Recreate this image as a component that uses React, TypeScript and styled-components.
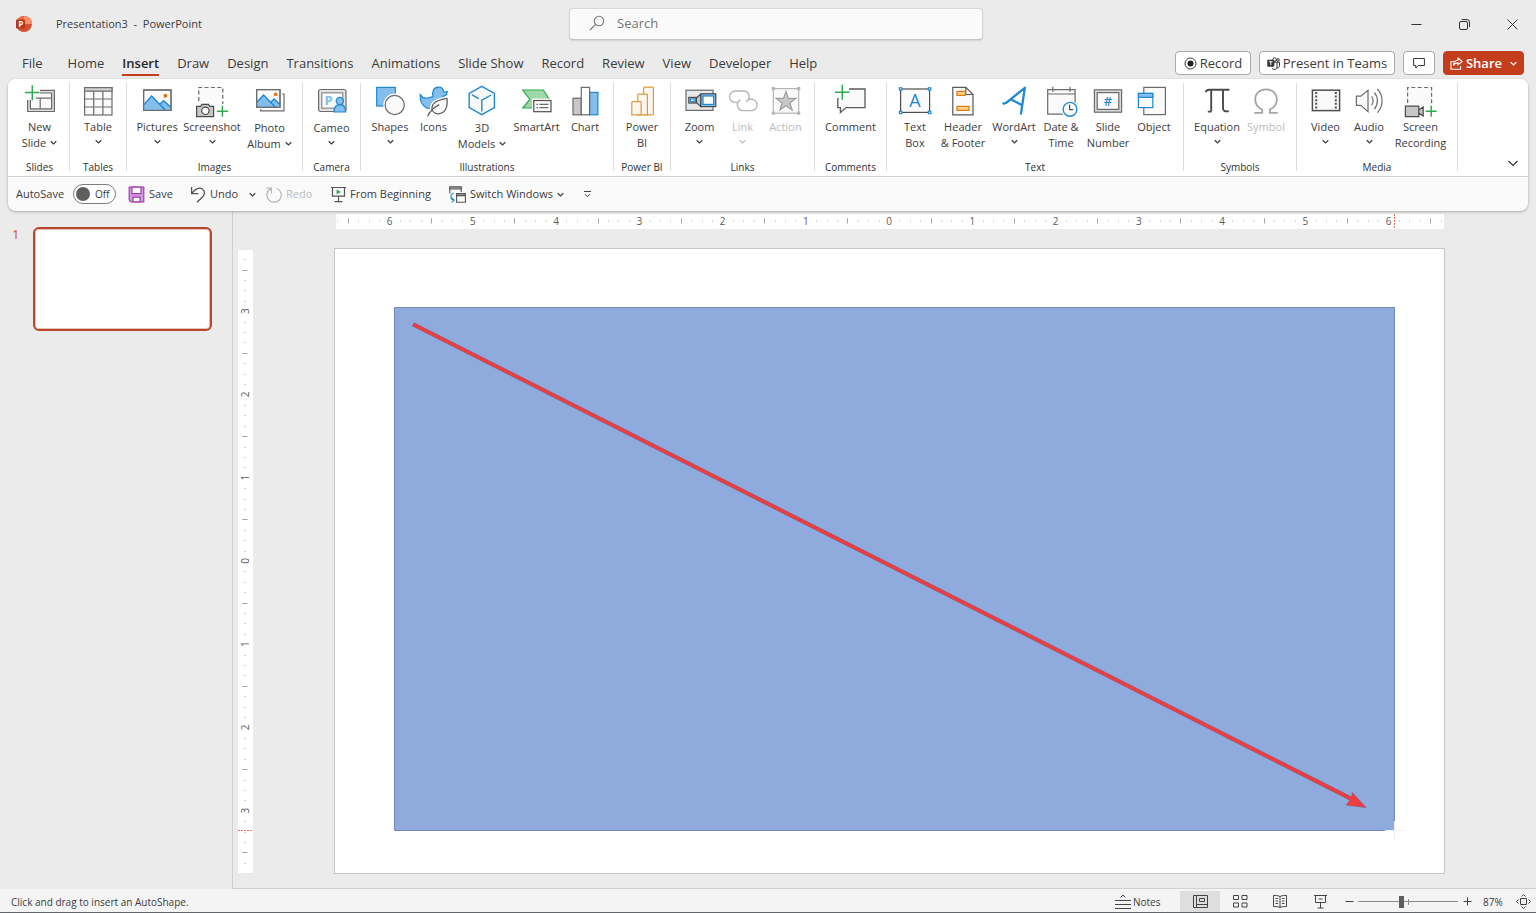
import React, { ReactNode } from 'react';
import styled, { createGlobalStyle } from 'styled-components';

const INK = '#3b3b3b';
const LINE = '#6b6b6b';
const BLUE = '#1e88d2';
const SKY = '#83beec';
const GREEN = '#2fa84f';
const MUTED = '#b5b5b5';
const ACCENT = '#c43e1c';

const GlobalStyle = createGlobalStyle`
  *, *::before, *::after { box-sizing: border-box; }
  body {
    margin: 0;
    background: #ebebeb;
    color: ${INK};
    font-family: 'Open Sans', 'Noto Sans', sans-serif;
    font-size: 11px;
    line-height: 16px;
  }
  button, input { font: inherit; color: inherit; }
  button { border: 0; padding: 0; background: none; cursor: pointer; white-space: nowrap; }
  svg { display: block; flex: none; }
`;

const Shell = styled.div`
  display: flex;
  flex-direction: column;
  min-height: 100vh;
`;

/* ---------- title bar ---------- */

const TitleBar = styled.header`
  display: grid;
  grid-template-columns: 1fr minmax(240px, 414px) 1fr;
  align-items: center;
  height: 48px;
  padding-left: 16px;
`;

const TitleLeft = styled.div`
  display: flex;
  align-items: center;
  gap: 24px;
  white-space: pre;
`;

const SearchField = styled.label`
  display: flex;
  align-items: center;
  gap: 12px;
  height: 32px;
  padding: 0 19px 2px;
  background: #fafafa;
  border: 1px solid #d8d8d8;
  border-bottom-color: #c4c4c4;
  border-radius: 4px;
  box-shadow: 0 1px 2px rgba(0, 0, 0, 0.12);
`;

const SearchInput = styled.input`
  flex: 1;
  min-width: 0;
  border: 0;
  padding: 0;
  outline: 0;
  background: none;
  font-size: 13px;
  &::placeholder { color: #757575; opacity: 1; }
`;

const WindowButtons = styled.div`
  display: flex;
  justify-content: flex-end;
`;

const WindowButton = styled.button`
  display: grid;
  place-items: center;
  width: 48px;
  height: 48px;
`;

/* ---------- tab row ---------- */

const TabRow = styled.div`
  display: flex;
  justify-content: space-between;
  height: 31px;
  padding: 3px 12px 0 22px;
  font-size: 13px;
`;

const Tabs = styled.nav`
  display: flex;
  gap: 18px;
`;

const Tab = styled.button<{ $active?: boolean; $first?: boolean }>`
  height: 25px;
  margin-right: ${p => (p.$first ? 7 : 0)}px;
  padding-top: 1px;
  border-bottom: 2px solid ${p => (p.$active ? ACCENT : 'transparent')};
  font-weight: ${p => (p.$active ? 600 : 400)};
  line-height: 22px;
  color: ${p => (p.$active ? '#262626' : INK)};
`;

const TabActions = styled.div`
  display: flex;
  gap: 8px;
`;

const ActionButton = styled.button<{ $width: number; $primary?: boolean }>`
  display: flex;
  align-items: center;
  justify-content: center;
  gap: 3px;
  width: ${p => p.$width}px;
  height: 24px;
  border: 1px solid ${p => (p.$primary ? ACCENT : '#a9a9a9')};
  border-radius: 4px;
  background: ${p => (p.$primary ? ACCENT : '#ffffff')};
  color: ${p => (p.$primary ? '#ffffff' : INK)};
  font-weight: ${p => (p.$primary ? 600 : 400)};
`;

const ShareLabel = styled.span`
  margin-right: 5px;
`;

/* ---------- ribbon ---------- */

const RibbonPanel = styled.section`
  position: relative;
  margin: 0 8px;
  border-radius: 8px;
  background: #fafafa;
  box-shadow: 0 1px 3px rgba(0, 0, 0, 0.28);
`;

const Ribbon = styled.div`
  display: flex;
  height: 98px;
  padding: 4px 8px 5px 2px;
  background: #ffffff;
  border-bottom: 1px solid #d2d2d2;
  border-radius: 8px 8px 0 0;
`;

const Group = styled.div<{ $width: number }>`
  display: flex;
  flex-direction: column;
  justify-content: space-between;
  align-items: center;
  width: ${p => p.$width}px;
  border-right: 1px solid #dcdcdc;
`;

const GroupTools = styled.div`
  display: flex;
  align-items: flex-start;
  padding-top: 1px;
`;

const GroupLabel = styled.span`
  font-size: 10px;
  line-height: 14px;
  margin-bottom: -3px;
  white-space: nowrap;
  color: #2f2f2f;
`;

const Tool = styled.button<{ $width: number; $drop?: boolean }>`
  display: flex;
  flex-direction: column;
  align-items: center;
  width: ${p => p.$width}px;
  color: ${p => (p.disabled ? '#bcbcbc' : INK)};
  & > svg { margin-bottom: ${p => (p.$drop ? 2 : 1)}px; }
`;

const LabelLine = styled.span`
  display: flex;
  align-items: center;
  justify-content: center;
  gap: 4px;
  height: 16px;
  & > svg { margin-bottom: 2px; }
`;

const ChevronLine = styled.span`
  display: flex;
  align-items: center;
  height: 13px;
`;

const CollapseButton = styled.button`
  align-self: flex-end;
  margin: 0 0 1px auto;
  padding: 2px;
`;

/* ---------- quick access toolbar ---------- */

const QuickBar = styled.div`
  display: flex;
  align-items: center;
  height: 34px;
  padding: 0 8px;
`;

const QuickButton = styled.button<{ $width: number }>`
  display: flex;
  align-items: center;
  gap: 4px;
  width: ${p => p.$width}px;
  color: ${p => (p.disabled ? '#bcbcbc' : INK)};
`;

const AutoSave = styled.label`
  display: flex;
  align-items: center;
  gap: 9px;
  width: 112px;
`;

const Switch = styled.span`
  display: flex;
  align-items: center;
  gap: 5px;
  width: 43px;
  height: 20px;
  padding-left: 2px;
  border: 1px solid #7d7d7d;
  border-radius: 10px;
  background: #ffffff;
  font-size: 10px;
  &::before {
    content: '';
    width: 14px;
    height: 14px;
    border-radius: 50%;
    background: #5f5e5c;
  }
`;

const HiddenCheck = styled.input`
  position: absolute;
  opacity: 0;
  pointer-events: none;
`;

/* ---------- document area ---------- */

const Main = styled.main`
  display: flex;
  flex: 1;
`;

const Sidebar = styled.aside`
  display: flex;
  align-items: flex-start;
  gap: 13px;
  width: 233px;
  padding: 16px 20px 0 12px;
  border-right: 1px solid #d0d0d0;
`;

const SlideIndex = styled.span`
  width: 8px;
  font-size: 13px;
  line-height: 14px;
  color: #d8502e;
`;

const Thumb = styled.button`
  flex: 1;
  height: 104px;
  border: 2px solid #b7472a;
  border-radius: 6px;
  background: #ffffff;
  box-shadow: inset 0 0 0 1px rgba(183, 71, 42, 0.35);
`;

const Workspace = styled.div`
  flex: 1;
  display: grid;
  grid-template-columns: 15px 1fr;
  grid-template-rows: 15px auto;
  column-gap: 81px;
  row-gap: 19px;
  align-content: start;
  padding: 3px 91px 14px 5px;
  border-bottom: 1px solid #d0d0d0;
  & > svg { width: 100%; height: 100%; }
`;

const Slide = styled.div`
  grid-column: 2;
  border: 1px solid #c6c6c6;
  background: #ffffff;
  & > svg { width: 100%; height: auto; }
`;

/* ---------- status bar ---------- */

const StatusBar = styled.footer`
  display: flex;
  align-items: center;
  height: 24px;
  padding: 2px 5px 0 11px;
  background: #f4f4f4;
  border-bottom: 1px solid #62666c;
  font-size: 10px;
`;

const StatusText = styled.span`
  flex: 1;
`;

const NotesButton = styled.button`
  display: flex;
  align-items: center;
  gap: 2px;
  width: 65px;
`;

const ViewButton = styled.button<{ $active?: boolean }>`
  display: grid;
  place-items: center;
  width: 40px;
  height: 21px;
  background: ${p => (p.$active ? '#dedede' : 'transparent')};
`;

const ZoomStep = styled.button`
  display: grid;
  place-items: center;
  width: 18px;
  height: 16px;
`;

const ZoomSlider = styled.input`
  appearance: none;
  width: 100px;
  height: 12px;
  margin: 0;
  background:
    linear-gradient(#8a8a8a, #8a8a8a) 50px 50% / 1px 6px no-repeat,
    linear-gradient(#8a8a8a, #8a8a8a) 0 50% / 100% 1px no-repeat;
  &::-webkit-slider-thumb {
    appearance: none;
    width: 5px;
    height: 12px;
    background: #5e5e5e;
  }
`;

const ZoomValue = styled.span`
  width: 40px;
  padding-left: 7px;
`;

/* ---------- icons ---------- */

const Glyph = ({ children, color = LINE }: { children: ReactNode; color?: string }) => (
  <svg width="36" height="34" viewBox="0 0 36 34" fill="none" stroke={color} strokeWidth="1.2" aria-hidden="true">
    {children}
  </svg>
);

const Chevron = ({ color = INK, size = 7 }: { color?: string; size?: number }) => (
  <svg width={size} height={size} viewBox="0 0 7 7" fill="none" stroke={color} strokeWidth="1.2" aria-hidden="true">
    <path d="M.7 2.2 3.5 4.9 6.3 2.2" />
  </svg>
);

const NewSlideIcon = () => (
  <Glyph>
    <path d="M18 6.3h14.4v21.2H5.6V16h2.8v8.800h21.200V9H18Z" fill="#dcdcdc" stroke="none" />
    <path d="M18 9h11.6v15.8H8.4V14H14V9Z" fill="#fafafa" stroke="none" />
    <path d="M18 6.3h14.4v21.2H5.6V16" />
    <path d="M18 9h11.6v15.8H8.4V16" />
    <path d="M14 14.200h15.6M18.2 14.200v10.6" />
    <path d="M10.3 1.2v15M3 8.5h14.6" stroke={GREEN} strokeWidth="1.5" />
  </Glyph>
);

const TableIcon = () => (
  <Glyph>
    <rect x="4.6" y="3.6" width="27.4" height="27.4" fill="#fafafa" />
    <rect x="4.6" y="3.6" width="27.4" height="3.6" fill="#cfcfcf" />
    <path d="M4.6 15h27.4M4.6 23h27.4M13.7 7v24M22.9 7v24" />
  </Glyph>
);

const PicturesIcon = () => (
  <Glyph>
    <rect x="4.6" y="6" width="27.4" height="20.4" fill="#fafafa" />
    <path d="M5 20.6 12.6 12l13.6 14.2H5Z" fill={SKY} stroke="none" />
    <path d="m20.6 20.3 4-4 7.2 6.8v3.2h-5.4Z" fill={SKY} stroke="none" />
    <path d="M5 20.6 12.6 12l13.6 14M20.6 20.3l4-3.6 7.2 6.6" stroke={BLUE} strokeWidth="1.4" />
    <circle cx="26.4" cy="11.7" r="2" fill="#e8730c" stroke="none" />
    <rect x="4.6" y="6" width="27.4" height="20.4" />
  </Glyph>
);

const ScreenshotIcon = () => (
  <Glyph>
    <rect x="4.8" y="3.5" width="24" height="20" fill="#fafafa" stroke="none" />
    <path d="M4.8 17V3.5h24V20" strokeDasharray="4 2.4" />
    <path d="M2.6 22.4h4l1.4-2h6.4l1.6 2h3.6v10.2h-17Z" fill="#c9c7c5" stroke="#4a4a4a" />
    <circle cx="11.4" cy="26.8" r="3.7" fill="#fff" stroke="#4a4a4a" />
    <path d="M28.4 21.8v11M22.9 27.3h11" stroke={GREEN} strokeWidth="1.5" />
  </Glyph>
);

const AlbumIcon = () => (
  <Glyph>
    <path d="M30 10h2v16.8H8.6v-1.6" />
    <rect x="4.6" y="5.6" width="23.4" height="17.6" fill="#fafafa" />
    <path d="M5 18 11.6 11l11.6 12H5Z" fill={SKY} stroke="none" />
    <path d="m18.8 18.2 3.4-3.4 5.6 5.6V23h-4.6Z" fill={SKY} stroke="none" />
    <path d="M5 18 11.6 11l11.6 12M18.8 18.2l3.4-3.2 5.6 5.4" stroke={BLUE} strokeWidth="1.4" />
    <circle cx="23.6" cy="10.4" r="1.8" fill="#e8730c" stroke="none" />
    <rect x="4.6" y="5.6" width="23.4" height="17.6" />
  </Glyph>
);

const CameoIcon = () => (
  <Glyph>
    <rect x="4.6" y="5.5" width="27.4" height="22" rx="2" fill="#e4e4e4" />
    <rect x="7.8" y="8.8" width="21" height="15.4" fill="#fafafa" stroke="#8a8a8a" />
    <text x="10.4" y="21.4" fontSize="13" fontWeight="700" fill={SKY} stroke="none">P</text>
    <path d="M20 28c0-5 2-7.4 5.8-7.4s5.8 2.4 5.8 7.4Z" fill={SKY} stroke={BLUE} />
    <circle cx="25.8" cy="17" r="3.6" fill={SKY} stroke={BLUE} />
  </Glyph>
);

const ShapesIcon = () => (
  <Glyph>
    <rect x="4.7" y="3.4" width="18.6" height="18.6" fill={SKY} stroke={BLUE} />
    <circle cx="22.7" cy="21" r="11.4" fill="#fff" stroke="none" />
    <circle cx="22.7" cy="21" r="9.6" fill="#fafafa" />
  </Glyph>
);

const IconsIcon = () => (
  <Glyph>
    <path
      d="M17 12.600c-1.400-5 .8-9.400 5.400-9.400 3 0 5 2 5.200 4.400 1.200.8 2.600.6 3.600 0-.2 3-2 4.600-4 4.600-.6 1.600-1.400 2.400-2 3.600v5c-1.600 3-5 4.200-9.600 4.200C8.600 25 3.800 19.600 4.200 10.600c2 3 5 4.200 8 3.200Z"
      fill={SKY}
      stroke={BLUE}
    />
    <path d="M31 14.400c1 9-2 15-8.400 15.400-3.400.2-6.200-1.800-6.600-4.600-.6-6.600 5.200-9 15-10.800ZM11.600 32.400c1-2.400 2.400-4.800 4.400-6.800" fill="#fff" stroke="#fff" strokeWidth="4" />
    <path d="M31 14.400c1 9-2 15-8.400 15.400-3.400.2-6.200-1.800-6.600-4.600-.6-6.600 5.200-9 15-10.800Z" fill="#fafafa" stroke="#5a5a5a" />
    <path d="M11.600 32.400c2-5 5.800-8.800 11.600-11.800" stroke="#5a5a5a" />
  </Glyph>
);

const CubeIcon = () => (
  <Glyph color={BLUE}>
    <path d="M17.8 2.4 30.4 9.3v14.4l-12.6 6.9L5.2 23.700V9.3Z" fill="#fafafa" strokeWidth="1.4" />
    <path d="M17.8 27.4V16.200l9.400-5.200M8 10.8l6.8 3.8" strokeWidth="1.4" />
  </Glyph>
);

const SmartArtIcon = () => (
  <Glyph>
    <path d="M3.8 6h20.6l6 9.4L24.4 24H3.8l7-8.6Z" fill="#9fd8a8" stroke={GREEN} />
    <rect x="13" y="14.600" width="20.4" height="14.600" fill="#fff" stroke="none" />
    <rect x="14.8" y="16.5" width="17.2" height="11.2" fill="#fafafa" stroke="#4f4f4f" />
    <path d="M17.400 20.3h1.600M20.400 20.3h9M17.400 23.600h1.600M20.400 23.600h9" />
  </Glyph>
);

const ChartIcon = () => (
  <Glyph>
    <rect x="6" y="14.2" width="8.3" height="16.6" fill="#c9c7c5" />
    <rect x="22.6" y="8.4" width="8.3" height="22.4" fill={SKY} stroke={BLUE} />
    <rect x="14.3" y="3.4" width="8.3" height="27.4" fill="#fff" />
  </Glyph>
);

const PowerBiIcon = () => (
  <Glyph color="#e0993a">
    <rect x="19.6" y="3.2" width="9.8" height="27.6" rx="1" fill="#faf6f0" />
    <path d="M13.8 30.8V11.2q0-1 1-1h7.6q1 0 1 1v19.6Z" fill="#faf6f0" />
    <path d="M7.8 30.8V18.6q0-1 1-1h7.4q1 0 1 1v12.2Z" fill="#faf6f0" />
  </Glyph>
);

const ZoomIcon = () => (
  <Glyph>
    <rect x="4" y="6.2" width="27" height="20.2" fill="#e8e8e8" />
    <rect x="6.8" y="13.4" width="7.4" height="5.6" fill={SKY} stroke="#4a4a4a" />
    <rect x="8.6" y="15" width="3.600" height="2.400" fill="#fff" stroke={BLUE} strokeWidth="1" />
    <path d="m14.4 14 4.400-4v12.600l-4.400-4Z" fill="#c9c7c5" stroke="#4a4a4a" />
    <rect x="18.8" y="9.8" width="15" height="12.8" fill={SKY} stroke="#4a4a4a" />
    <rect x="21" y="12" width="10.6" height="8.4" fill="#fff" stroke={BLUE} />
  </Glyph>
);

const LinkIcon = () => (
  <Glyph color={MUTED}>
    <path d="M12.600 18.400h-2.400a5.700 5.700 0 0 1 0-11.400h8.400a5.700 5.700 0 0 1 2.600 10.700" strokeWidth="1.4" />
    <path d="M23.800 15.200h2.600a5.700 5.700 0 0 1 0 11.400h-8.400a5.700 5.700 0 0 1-2.600-10.700" strokeWidth="1.4" />
  </Glyph>
);

const ActionIcon = () => (
  <Glyph color={MUTED}>
    <rect x="5.3" y="4.6" width="25.4" height="24.6" fill="#fafafa" />
    <path d="m18 7.400 2.500 7h7.400l-6 4.500 2.300 7.100-6.200-4.300-6.200 4.300 2.300-7.100-6-4.500h7.400Z" fill="#c8c8c8" stroke="#a0a0a0" />
    {[5.3, 30.7].map(x => [4.6, 29.2].map(y => <rect key={`${x}-${y}`} x={x - 1.6} y={y - 1.6} width="3.2" height="3.2" fill="#b5b5b5" stroke="none" />))}
  </Glyph>
);

const CommentIcon = () => (
  <Glyph>
    <path d="M16 5h16v18.6H13l-5.600 5v-5H4.8V14" fill="#fafafa" stroke="#5a5a5a" strokeWidth="1.3" />
    <path d="M9.3.8v15M2 8.200h14.600" stroke="#fff" strokeWidth="4" />
    <path d="M9.3.8v15M2 8.200h14.600" stroke={GREEN} strokeWidth="1.5" />
  </Glyph>
);

const TextBoxIcon = () => (
  <Glyph>
    <rect x="3.6" y="5" width="29" height="23.4" fill="#fafafa" stroke="#4f4f4f" />
    {[3.6, 32.6].map(x => [5, 28.4].map(y => <rect key={`${x}-${y}`} x={x - 1.2} y={y - 1.2} width="2.4" height="2.4" fill="#fff" stroke={BLUE} />))}
    <text x="18" y="23.2" fontSize="18" textAnchor="middle" fill={BLUE} stroke="none">A</text>
  </Glyph>
);

const HeaderIcon = () => (
  <Glyph>
    <path d="M7.8 3.3h13l7.2 7.2v20.300H7.8Z" fill="#fafafa" stroke="#5a5a5a" />
    <path d="M20.8 3.3v7.200H28" stroke="#5a5a5a" />
    <rect x="12" y="7.4" width="8.4" height="4" fill="#fcd18a" stroke="#e0780c" />
    <rect x="12" y="22.4" width="12" height="4" fill="#fcd18a" stroke="#e0780c" />
  </Glyph>
);

const WordArtIcon = () => (
  <Glyph color={BLUE}>
    <path d="M7.4 19.4c1.600.6 3-.4 5-2.200L28.800 3.800 25 29.600M14.600 15.200l11.600 6" strokeWidth="2.3" strokeLinecap="round" strokeLinejoin="round" />
  </Glyph>
);

const DateIcon = () => (
  <Glyph>
    <path d="M4.7 5.6h27.400v24.600H4.7Z" fill="#fafafa" />
    <path d="M4.7 10h27.400M9.8 2.8v5M27 2.8v5" />
    <circle cx="27" cy="25.3" r="8.6" fill="#fff" stroke="none" />
    <circle cx="27" cy="25.3" r="6.9" fill="#fff" stroke={BLUE} strokeWidth="1.4" />
    <path d="M26.6 20.8v4.800h3.600" stroke="#4a4a4a" />
  </Glyph>
);

const SlideNumberIcon = () => (
  <Glyph>
    <rect x="4.4" y="5.8" width="27.2" height="22.4" fill="#d9d9d9" />
    <rect x="7.2" y="8.6" width="21.6" height="16.8" fill="#fafafa" />
    <text x="18" y="21.6" fontSize="13" fontWeight="600" textAnchor="middle" fill={BLUE} stroke="none">#</text>
  </Glyph>
);

const ObjectIcon = () => (
  <Glyph>
    <rect x="7.8" y="3.4" width="21.6" height="27.2" fill="#fafafa" />
    <rect x="2.4" y="9.4" width="14.4" height="14.2" fill="#fff" stroke={BLUE} />
    <rect x="2.4" y="9.4" width="14.4" height="4" fill={SKY} stroke={BLUE} />
  </Glyph>
);

const EquationIcon = () => (
  <Glyph color="#4a4a4a">
    <path d="M6.6 8.2c.8-2 2-2.400 3.400-2.400h20.400M12.200 5.800v21.800M8.800 27.600h3.600M24 5.800v18.400c0 2.600 1.600 3.600 5.800 3" strokeWidth="1.9" />
  </Glyph>
);

const SymbolIcon = () => (
  <Glyph color="#a6a6a6">
    <path d="M6.2 28.8h8v-3.200C10 23.6 7.200 20 7.200 15.400 7.200 9.400 11.800 5.400 18 5.400s10.800 4 10.800 10c0 4.600-2.800 8.200-7 10.200v3.200h8" strokeWidth="1.8" />
  </Glyph>
);

const VideoIcon = () => (
  <Glyph>
    <rect x="4.4" y="6.2" width="27.2" height="20.4" fill="#fafafa" stroke="#4f4f4f" strokeWidth="1.5" />
    <path d="M8.200 8v17M27.800 8v17" stroke="#4f4f4f" strokeWidth="2" strokeDasharray="2 1.6" />
  </Glyph>
);

const AudioIcon = () => (
  <Glyph>
    <path d="M5.400 12.200h4.400l7.200-6v21.400l-7.200-6.200H5.400Z" fill="#fafafa" />
    <path d="M20.600 12.400c2 2.400 2 6.400 0 8.800M23.400 8.600c4 4.400 4 12 0 16.400M26.400 5c6.200 6.600 6.200 17 0 23.600" />
  </Glyph>
);

const RecordingIcon = () => (
  <Glyph>
    <rect x="4.6" y="3.5" width="24" height="20" fill="#fafafa" stroke="none" />
    <path d="M4.6 19V3.500h24V20" strokeDasharray="4 2.4" />
    <path d="M2.4 22.2h13.400v10.400H2.400ZM15.800 26l4.400-3v9l-4.400-3Z" fill="#c9c7c5" stroke="#4a4a4a" />
    <path d="M28.2 21.8v11M22.700 27.3h11" stroke={GREEN} strokeWidth="1.5" />
  </Glyph>
);

/* ---------- ribbon data ---------- */

interface ToolSpec {
  icon: ReactNode;
  lines: string[];
  width: number;
  chevron?: 'below' | 'inline';
  drop?: boolean;
  disabled?: boolean;
}

interface GroupSpec {
  label: string;
  width: number;
  tools: ToolSpec[];
}

const groups: GroupSpec[] = [
  { label: 'Slides', width: 60, tools: [{ icon: <NewSlideIcon />, lines: ['New', 'Slide'], width: 58, chevron: 'inline' }] },
  { label: 'Tables', width: 57, tools: [{ icon: <TableIcon />, lines: ['Table'], width: 56, chevron: 'below' }] },
  {
    label: 'Images',
    width: 176,
    tools: [
      { icon: <PicturesIcon />, lines: ['Pictures'], width: 50, chevron: 'below' },
      { icon: <ScreenshotIcon />, lines: ['Screenshot'], width: 60, chevron: 'below' },
      { icon: <AlbumIcon />, lines: ['Photo', 'Album'], width: 55, chevron: 'inline', drop: true },
    ],
  },
  { label: 'Camera', width: 58, tools: [{ icon: <CameoIcon />, lines: ['Cameo'], width: 57, chevron: 'below', drop: true }] },
  {
    label: 'Illustrations',
    width: 253,
    tools: [
      { icon: <ShapesIcon />, lines: ['Shapes'], width: 44, chevron: 'below' },
      { icon: <IconsIcon />, lines: ['Icons'], width: 43 },
      { icon: <CubeIcon />, lines: ['3D', 'Models'], width: 54, chevron: 'inline', drop: true },
      { icon: <SmartArtIcon />, lines: ['SmartArt'], width: 55 },
      { icon: <ChartIcon />, lines: ['Chart'], width: 42 },
    ],
  },
  { label: 'Power BI', width: 57, tools: [{ icon: <PowerBiIcon />, lines: ['Power', 'BI'], width: 56 }] },
  {
    label: 'Links',
    width: 144,
    tools: [
      { icon: <ZoomIcon />, lines: ['Zoom'], width: 43, chevron: 'below' },
      { icon: <LinkIcon />, lines: ['Link'], width: 43, chevron: 'below', disabled: true },
      { icon: <ActionIcon />, lines: ['Action'], width: 43, disabled: true },
    ],
  },
  { label: 'Comments', width: 72, tools: [{ icon: <CommentIcon />, lines: ['Comment'], width: 71 }] },
  {
    label: 'Text',
    width: 297,
    tools: [
      { icon: <TextBoxIcon />, lines: ['Text', 'Box'], width: 42 },
      { icon: <HeaderIcon />, lines: ['Header', '& Footer'], width: 54 },
      { icon: <WordArtIcon />, lines: ['WordArt'], width: 48, chevron: 'below' },
      { icon: <DateIcon />, lines: ['Date &', 'Time'], width: 46 },
      { icon: <SlideNumberIcon />, lines: ['Slide', 'Number'], width: 48 },
      { icon: <ObjectIcon />, lines: ['Object'], width: 44 },
    ],
  },
  {
    label: 'Symbols',
    width: 113,
    tools: [
      { icon: <EquationIcon />, lines: ['Equation'], width: 52, chevron: 'below' },
      { icon: <SymbolIcon />, lines: ['Symbol'], width: 46, disabled: true },
    ],
  },
  {
    label: 'Media',
    width: 161,
    tools: [
      { icon: <VideoIcon />, lines: ['Video'], width: 44, chevron: 'below' },
      { icon: <AudioIcon />, lines: ['Audio'], width: 43, chevron: 'below' },
      { icon: <RecordingIcon />, lines: ['Screen', 'Recording'], width: 60 },
    ],
  },
];

const RibbonTool = ({ icon, lines, width, chevron, drop, disabled }: ToolSpec) => {
  const chevronColor = disabled ? '#bcbcbc' : INK;
  return (
    <Tool $width={width} $drop={drop} disabled={disabled}>
      {icon}
      {lines.map((line, i) => (
        <LabelLine key={line}>
          {line}
          {chevron === 'inline' && i === lines.length - 1 && <Chevron color={chevronColor} />}
        </LabelLine>
      ))}
      {chevron === 'below' && (
        <ChevronLine>
          <Chevron color={chevronColor} />
        </ChevronLine>
      )}
    </Tool>
  );
};

/* ---------- rulers ---------- */

const INCH = 83.25;

const Ruler = ({ length, centre, last, marker, vertical }: { length: number; centre: number; last: number; marker: number; vertical?: boolean }) => {
  const marks = [];
  for (let i = -last; i <= last; i++) {
    const at = centre + (i * INCH) / 8;
    if (i % 8 === 0) {
      marks.push(
        <text
          key={i}
          x={vertical ? 0 : at}
          y={vertical ? 0 : 11}
          transform={vertical ? `translate(11 ${at}) rotate(-90)` : undefined}
          textAnchor="middle"
          fontSize="10"
          fill="#5a5a5a"
        >
          {Math.abs(i / 8)}
        </text>,
      );
    } else {
      const half = i % 4 === 0 ? 2.5 : 0.5;
      marks.push(
        vertical ? (
          <path key={i} d={`M${7 - half} ${Math.round(at) + 0.5}h${half * 2}`} stroke="#a3a3a3" />
        ) : (
          <path key={i} d={`M${Math.round(at) + 0.5} ${7 - half}v${half * 2}`} stroke="#a3a3a3" />
        ),
      );
    }
  }
  return (
    <svg viewBox={vertical ? `0 0 15 ${length}` : `0 0 ${length} 15`} aria-hidden="true">
      <rect x={vertical ? 0 : 2} y={vertical ? 2 : 0} width={vertical ? 15 : length - 3} height={vertical ? length - 3 : 15} fill="#ffffff" />
      {marks}
      <path d={vertical ? `M0 ${marker}h15` : `M${marker} 0v15`} stroke="#e8704f" strokeDasharray="2 1" />
    </svg>
  );
};

const SlideDrawing = () => (
  <svg viewBox="0 0 1109 624" role="img" aria-label="Rectangle being drawn on the slide">
    <rect x="59.5" y="58.5" width="1000.5" height="523.5" fill="#8faadc" />
    <path d="M1050 581.5H59.5V58.5h1000V572" fill="none" stroke="#7288b8" />
    <path d="M1059.5 572v19M1050 581.5h19" stroke="#eef0f3" fill="none" />
    <g stroke="#8a4f70" strokeOpacity=".7" strokeWidth=".8" fill="#f03c3c">
      <path d="M79 73.8 77.5 77 1015 551.200 1011 556 1031 558.600 1017.200 543.400 1016.800 548Z" />
    </g>
  </svg>
);

/* ---------- page ---------- */

const tabs = ['File', 'Home', 'Insert', 'Draw', 'Design', 'Transitions', 'Animations', 'Slide Show', 'Record', 'Review', 'View', 'Developer', 'Help'];

export default function App() {
  return (
    <Shell>
      <GlobalStyle />
      <TitleBar>
        <TitleLeft>
          <svg width="16" height="16" viewBox="0 0 16 16" aria-hidden="true">
            <circle cx="8" cy="8" r="8" fill="#d35230" />
            <path d="M8 0a8 8 0 0 1 8 8H8Z" fill="#ff8f6b" />
            <path d="M8 0a8 8 0 0 0-7.8 6.5L8 8Z" fill="#ed6c47" />
            <rect y="3.5" width="9" height="9" rx="1" fill="#b7371c" />
            <text x="4.7" y="10.8" fontSize="8" fontWeight="700" textAnchor="middle" fill="#fff">P</text>
          </svg>
          {'Presentation3  -  PowerPoint'}
        </TitleLeft>
        <SearchField>
          <svg width="16" height="16" viewBox="0 0 16 16" fill="none" stroke="#757575" strokeWidth="1.1" aria-hidden="true">
            <circle cx="10" cy="6" r="4.7" />
            <path d="M6.6 9.4 1 15" />
          </svg>
          <SearchInput placeholder="Search" aria-label="Search" />
        </SearchField>
        <WindowButtons>
          <WindowButton aria-label="Minimize">
            <svg width="11" height="11" viewBox="0 0 11 11" stroke="#333"><path d="M.5 5.5h10" /></svg>
          </WindowButton>
          <WindowButton aria-label="Restore">
            <svg width="11" height="11" viewBox="0 0 11 11" fill="none" stroke="#333">
              <rect x=".5" y="2.5" width="8" height="8" rx="1.5" />
              <path d="M2.6.6H8a2.500 2.500 0 0 1 2.500 2.500v5" />
            </svg>
          </WindowButton>
          <WindowButton aria-label="Close">
            <svg width="11" height="11" viewBox="0 0 11 11" stroke="#333"><path d="m.5.5 10 10m0-10-10 10" /></svg>
          </WindowButton>
        </WindowButtons>
      </TitleBar>

      <TabRow>
        <Tabs>
          {tabs.map((tab, i) => (
            <Tab key={tab} $active={tab === 'Insert'} $first={i === 0}>{tab}</Tab>
          ))}
        </Tabs>
        <TabActions>
          <ActionButton $width={76}>
            <svg width="13" height="13" viewBox="0 0 13 13" fill="none" stroke="#333" aria-hidden="true">
              <circle cx="6.5" cy="6.5" r="5.5" />
              <circle cx="6.5" cy="6.5" r="3" fill="#222" stroke="none" />
            </svg>
            Record
          </ActionButton>
          <ActionButton $width={136}>
            <svg width="13" height="13" viewBox="0 0 13 13" fill="none" stroke="#333" aria-hidden="true">
              <circle cx="7.6" cy="2.6" r="1.8" />
              <circle cx="11" cy="3" r="1.3" />
              <path d="M5 5.200h5v4.600a2.800 2.800 0 0 1-5 1.600M10 5.200h2.500v3.600a2 2 0 0 1-2.500 2" />
              <rect x=".3" y="2.8" width="7" height="7" rx=".8" fill="#333" stroke="none" />
              <path d="M2 4.700h3.600M3.800 4.700v3.600" stroke="#fff" />
            </svg>
            Present in Teams
          </ActionButton>
          <ActionButton $width={32} aria-label="Comments">
            <svg width="12" height="12" viewBox="0 0 12 12" fill="none" stroke="#333" aria-hidden="true">
              <path d="M.6 1.500h10.800v7H5.200L2.800 11V8.500H.6Z" />
            </svg>
          </ActionButton>
          <ActionButton $width={81} $primary>
            <svg width="13" height="13" viewBox="0 0 13 13" fill="none" stroke="#fff" strokeWidth="1.1" aria-hidden="true">
              <path d="M4 4.500H1v7.700h9.600V9M8 1l4 3.400-4 3.400V5.900C5.600 5.800 4.400 6.800 3.400 8.600c.2-3 1.800-5.200 4.600-5.600Z" />
            </svg>
            <ShareLabel>Share</ShareLabel>
            <Chevron color="#fff" />
          </ActionButton>
        </TabActions>
      </TabRow>

      <RibbonPanel>
        <Ribbon>
          {groups.map(group => (
            <Group key={group.label} $width={group.width}>
              <GroupTools>
                {group.tools.map(tool => (
                  <RibbonTool key={tool.lines.join(' ')} {...tool} />
                ))}
              </GroupTools>
              <GroupLabel>{group.label}</GroupLabel>
            </Group>
          ))}
          <CollapseButton aria-label="Collapse ribbon">
            <svg width="10" height="10" viewBox="0 0 10 10" fill="none" stroke="#333" strokeWidth="1.2"><path d="M.5 3 5 7.500 9.500 3" /></svg>
          </CollapseButton>
        </Ribbon>

        <QuickBar>
          <AutoSave>
            AutoSave
            <HiddenCheck type="checkbox" />
            <Switch>Off</Switch>
          </AutoSave>
          <QuickButton $width={62}>
            <svg width="17" height="17" viewBox="0 0 17 17" fill="#d59bdc" stroke="#a13fb0" strokeWidth="1.2" aria-hidden="true">
              <path d="M1.2 1.200h14.600v14.600H3L1.200 14Z" />
              <path d="M4 1.200h9v6.400H4Z" fill="#fff" />
              <path d="M5 15.800v-4.600h7v4.600Z" fill="#fff" />
            </svg>
            Save
          </QuickButton>
          <QuickButton $width={59}>
            <svg width="16" height="17" viewBox="0 0 16 17" fill="none" stroke="#555" strokeWidth="1.3" aria-hidden="true">
              <path d="M1.600 1v6.600h6.800M1.900 7.300C5.200 2.800 9.600.8 12.600 3.200c3 2.500 2 6-.6 8.400L7 16.200" />
            </svg>
            Undo
          </QuickButton>
          <QuickButton $width={16} aria-label="Undo history"><Chevron /></QuickButton>
          <QuickButton $width={66} disabled>
            <svg width="17" height="17" viewBox="0 0 17 17" fill="none" stroke="#b5b5b5" strokeWidth="1.2" aria-hidden="true">
              <path d="M1 2h5.400v5.400M6.200 2.400A7.200 7.200 0 1 0 11.500 2.200" />
            </svg>
            Redo
          </QuickButton>
          <QuickButton $width={118}>
            <svg width="15" height="17" viewBox="0 0 15 17" fill="none" stroke="#555" strokeWidth="1.2" aria-hidden="true">
              <path d="M0 1.500h15M1.500 1.500v8.600h12V1.500M7.500 10v5.600M3.500 15.600h8" />
              <path d="m5.600 3.600 4.400 2.300-4.400 2.300Z" fill={GREEN} stroke="none" />
            </svg>
            From Beginning
          </QuickButton>
          <QuickButton $width={134}>
            <svg width="17" height="17" viewBox="0 0 17 17" fill="#fafafa" stroke="#555" strokeWidth="1.1" aria-hidden="true">
              <path d="M.8 7.600V1h11.400v5" />
              <path d="M.8 1h11.400v2H.8Z" fill="#b0b0b0" />
              <path d="M7.600 7.600h8.800v8.600H7.600Z" />
              <path d="M7.600 7.600h8.800v2H7.600Z" fill="#b0b0b0" />
              <path d="M4.600 7C1 8.600.8 13 4.600 14M2.400 11.600l2.800 2.500L2.600 16.400" fill="none" stroke={BLUE} />
            </svg>
            Switch Windows
            <Chevron />
          </QuickButton>
          <QuickButton $width={9} aria-label="Customize toolbar">
            <svg width="9" height="9" viewBox="0 0 9 9" fill="none" stroke="#444"><path d="M1 1.500h7M2 4.200 4.500 6.700 7 4.200" /></svg>
          </QuickButton>
        </QuickBar>
      </RibbonPanel>

      <Main>
        <Sidebar>
          <SlideIndex>1</SlideIndex>
          <Thumb aria-label="Slide 1" />
        </Sidebar>
        <Workspace>
          <span />
          <Ruler length={1111} centre={555} last={53} marker={1060.5} />
          <Ruler length={626} centre={313} last={29} marker={582.5} vertical />
          <Slide>
            <SlideDrawing />
          </Slide>
        </Workspace>
      </Main>

      <StatusBar>
        <StatusText>Click and drag to insert an AutoShape.</StatusText>
        <NotesButton>
          <svg width="16" height="15" viewBox="0 0 16 15" fill="none" stroke="#444" aria-hidden="true">
            <path d="M0 6.500h16M0 10.500h16M0 14.500h16M5.500 3.500 8 1l2.500 2.500" />
          </svg>
          Notes
        </NotesButton>
        <ViewButton $active aria-label="Normal view">
          <svg width="15" height="13" viewBox="0 0 15 13" fill="none" stroke="#444">
            <path d="M.5.5h14v12H.5ZM3.500.5v12M3.500 9.500h11M6.500 3.500h5v3h-5Z" />
          </svg>
        </ViewButton>
        <ViewButton aria-label="Slide sorter">
          <svg width="15" height="13" viewBox="0 0 15 13" fill="none" stroke="#444">
            <path d="M.5.5h5v4h-5ZM9 .5h5v4H9ZM.5 8h5v4h-5ZM9 8h5v4H9Z" />
          </svg>
        </ViewButton>
        <ViewButton aria-label="Reading view">
          <svg width="14" height="13" viewBox="0 0 14 13" fill="none" stroke="#444">
            <path d="M7 1.500C5 .5 3 .5.5.5v11c2.500 0 4.500 0 6.500 1 2-1 4-1 6.500-1V.5C11 .5 9 .5 7 1.500ZM7 1.500v11M2.500 3.500h2.500M2.500 6h2.500M2.500 8.500h2.500M9 3.500h2.500M9 6h2.500M9 8.500h2.500" />
          </svg>
        </ViewButton>
        <ViewButton aria-label="Slide show">
          <svg width="13" height="14" viewBox="0 0 13 14" fill="none" stroke="#444">
            <path d="M0 .5h13M1.500.5v7h10v-7M4.500 4h4M6.500 7.500v5.500M3.500 13h6" />
          </svg>
        </ViewButton>
        <ZoomStep aria-label="Zoom out">
          <svg width="9" height="9" viewBox="0 0 9 9" stroke="#444"><path d="M.5 4.500h8" /></svg>
        </ZoomStep>
        <ZoomSlider type="range" min="0" max="100" defaultValue="43" aria-label="Zoom" />
        <ZoomStep aria-label="Zoom in">
          <svg width="9" height="9" viewBox="0 0 9 9" stroke="#444"><path d="M.5 4.500h8M4.500.5v8" /></svg>
        </ZoomStep>
        <ZoomValue>87%</ZoomValue>
        <button aria-label="Fit slide to window">
          <svg width="15" height="15" viewBox="0 0 15 15" fill="none" stroke="#444">
            <path d="M4.500 4.500h6v6h-6ZM5.500 2.500l2-2 2 2M5.500 12.500l2 2 2-2M2.500 5.500l-2 2 2 2M12.500 5.500l2 2-2 2" />
          </svg>
        </button>
      </StatusBar>
    </Shell>
  );
}
